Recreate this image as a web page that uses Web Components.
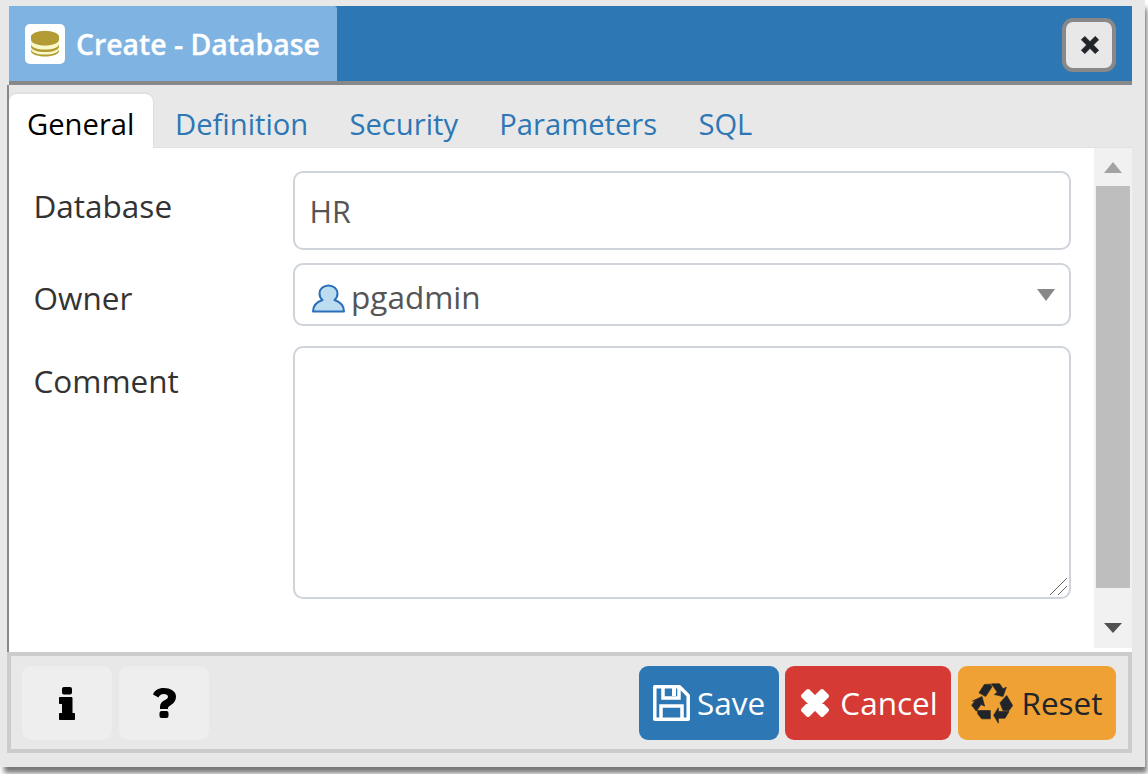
<!DOCTYPE html>
<html><head><meta charset="utf-8">
<style>
html,body{margin:0;padding:0;background:#fff;width:1148px;height:774px;overflow:hidden;font-family:"Open Sans",sans-serif}
</style></head><body>
<pg-dialog>
  <svg slot="icon" viewBox="0 0 40 40" width="40" height="40"><rect width="40" height="40" rx="5" fill="#fff"/><path d="M6 12v15c0 3 6 5.500 14 5.500s14-2.500 14-5.500V12z" fill="#b39b34"/><path d="M6 15.500c0 3.500 6 6 14 6s14-2.500 14-6v4.500c0 3.500-6 5.500-14 5.500s-14-2-14-5.500zM6 22.500c0 3.500 6 5.500 14 5.500s14-2 14-5.500v2.500c0 3.500-6 5.500-14 5.500s-14-2-14-5.500z" fill="#f8f8c8"/><ellipse cx="20" cy="12.800" rx="14" ry="6" fill="#b39b34"/></svg>
  <span slot="title">Create - Database</span>
  <pg-tabs slot="tabs"><span class="on">General</span><span>Definition</span><span>Security</span><span>Parameters</span><span>SQL</span></pg-tabs>
  <pg-form slot="body"></pg-form>
  <pg-footer slot="footer"></pg-footer>
</pg-dialog>
<script>
function def(name,html){customElements.define(name,class extends HTMLElement{constructor(){super();this.attachShadow({mode:'open'}).innerHTML=html;}});}
def('pg-dialog',`<style>
:host{display:flex;flex-direction:column;width:1145px;height:767px;background:#e8e8e8;box-shadow:3px 7px 5px -1px #777;box-sizing:border-box;padding:6px 13px 14px 7px}
.head{height:79px;box-sizing:border-box;flex:none;background:#2d77b5;margin-left:2px;display:flex;border-bottom:4px solid #888}
.ttl{width:328px;background:#7fb3e2;display:flex;align-items:center;box-sizing:border-box;padding:0 0 0 16px;gap:11px;color:#fff;font-weight:600;font-size:28.400px;border-radius:0 3px 0 0;height:75px;-webkit-text-stroke:.3px #fff}
.close{margin:12px 16px 0 auto;width:54px;height:54px;box-sizing:border-box;border:4px solid #888;border-radius:11px;background:#e8e8e8;display:flex;align-items:center;justify-content:center;padding-left:1px}
.main{flex:1;min-height:0;border-left:2px solid #888;display:flex;flex-direction:column}
.foot{flex:none}
</style>
<div class="head"><div class="ttl"><slot name="icon"></slot><slot name="title"></slot></div>
<div class="close"><svg width="20" height="20" viewBox="0 0 20 20"><path d="M4.800 1.500 10 6.700 15.200 1.500 18.500 4.800 13.300 10 18.500 15.200 15.200 18.500 10 13.300 4.800 18.500 1.500 15.200 6.700 10 1.500 4.800z" fill="#212529" stroke="#212529" stroke-linejoin="round"/></svg></div></div>
<div class="main"><slot name="tabs"></slot><slot name="body"></slot></div>
<div class="foot"><slot name="footer"></slot></div>`);
def('pg-tabs',`<style>
:host{display:flex;flex:none;height:63px;box-sizing:border-box;background:#e8e8e8;border-bottom:1px solid #dee2e6;padding:9px 0 0 0;font-size:29.200px;color:#2d77b5}
::slotted(span){padding:7px 20.600px 0;height:53px;box-sizing:border-box;line-height:46px}
::slotted(.on){background:#fff;color:#000;border-radius:8px 8px 0 0;height:54px;margin-bottom:-1px;margin-right:1.400px;padding:7px 20px 0 18px;box-shadow:0 -2px 0 #e0e0e0,1px 0 0 #ddd;width:144px;flex:none}
</style><slot></slot>`);
def('pg-form',`<style>
:host{display:flex;flex:1;min-height:0;background:#fff;color:#333}
.form{flex:1;padding:23px 23px 0 24.500px;display:grid;grid-template-columns:259.500px 1fr;grid-template-rows:79px 63px 253px;row-gap:13px;font-size:31.500px;align-content:start}
.form>label{padding-top:13px}
.f{border:2px solid #ced4da;border-radius:10px;box-sizing:border-box;display:flex;align-items:center;padding:0 14.500px;color:#555;position:relative;font-size:30.500px}
.f.c{margin-top:7px;height:253px}
label.lc{padding-top:20px!important}
.sel{padding-left:17px;gap:6px;padding-top:4px;font-size:31.500px}
.sel svg{margin-top:4px}
.caret{position:absolute;right:14px;top:24px;width:0;height:0;border:9px solid transparent;border-top:12px solid #888;border-bottom:0}
.grip{position:absolute;right:1px;bottom:1px}
.bar{width:38px;flex:none;background:#f1f1f1;padding:0 2px;box-sizing:border-box;display:flex;flex-direction:column;margin-bottom:4px}
.up{height:38px;flex:none;display:flex;align-items:center;justify-content:center}
.dn{height:60px;flex:none;display:flex;align-items:flex-end;justify-content:center;padding-bottom:15px;box-sizing:border-box}
.thumb{flex:1;background:#bebebe}
</style>
<div class="form"><label>Database</label><div class="f">HR</div>
<label>Owner</label><div class="f sel"><svg width="33" height="29" viewBox="0 0 33 29"><path d="M1 27.500c0-6 3.500-9.500 9.500-11.500-2-1.800-3-4-3-6.500C7.500 5 11.500 1.500 16.500 1.500s9 3.500 9 8c0 2.500-1 4.700-3 6.500 6 2 9.500 5.500 9.500 11.500z" fill="#bcdcf0" stroke="#2a6fbd" stroke-width="2" stroke-linejoin="round"/></svg><span>pgadmin</span><i class="caret"></i></div>
<label class="lc">Comment</label><div class="f c"><svg class="grip" width="20" height="20" viewBox="0 0 20 20"><path d="M2 19 19 2M10 19 19 10" stroke="#666" stroke-width="1"/></svg></div></div>
<div class="bar"><div class="up"><svg width="18" height="11"><path d="M0 11 9 0 18 11z" fill="#a3a3a3"/></svg></div><div class="thumb"></div><div class="dn"><svg width="18" height="10"><path d="M0 0H18L9 10z" fill="#505050"/></svg></div></div>`);
def('pg-footer',`<style>
:host{display:flex;box-sizing:border-box;height:101px;border:4px solid #ccc;background:#e8e8e8;padding:10px 12px 9px 11px;gap:7px;font-size:31.500px}
.b{height:74px;border-radius:9px;box-sizing:border-box;display:flex;align-items:center;justify-content:center;color:#fff}
.b span{padding-bottom:2px}
.g{width:90px;background:#eee}
.sp{flex:1}
.save{width:140px;background:#2d77b5;gap:7px;margin-right:-1px}
.cancel{width:166px;background:#d63a34;gap:10px;padding-left:2px}
.reset{width:158px;background:#efa134;color:#212529;gap:8px}
</style>
<div class="b g"><svg width="16" height="33" viewBox="0 0 16 33"><rect x="3" y="0" width="10" height="7.500" rx="2"/><path d="M1 10h11c1 0 1.500.5 1.500 1.500V26H15c.6 0 1 .4 1 1v5c0 .6-.4 1-1 1H1c-.6 0-1-.4-1-1v-5c0-.6.4-1 1-1h2V17H1c-.6 0-1-.4-1-1v-5c0-.6.4-1 1-1z"/></svg></div>
<div class="b g"><svg width="23" height="30" viewBox="0 0 23 30"><path d="M11 0C5 0 1.500 2.500 0 6.500L5.500 9.500C6.500 7.500 8 6 10.800 6 13 6 15 7 15 8.800 15 10.500 13.500 11.200 11.500 12.300 9.200 13.500 7 15.500 7 19V21H15V20C15 17.500 23 16.500 23 8.500 23 3 17 0 11 0Z"/><rect x="6.500" y="23" width="9" height="7" rx="2"/></svg></div>
<div class="sp"></div>
<div class="b save"><svg width="37" height="36" viewBox="0 0 37 36" fill="none" stroke="#fff" stroke-width="3.500"><path d="M1.800 1.800H26.500L35.200 10.500V34.200H1.800z" stroke-linejoin="round"/><path d="M10 2V13H26V2M8 34V21H29V34"/><rect x="19" y="3" width="4" height="8" fill="#fff" stroke="none"/></svg><span>Save</span></div>
<div class="b cancel"><svg width="30" height="30" viewBox="0 0 30 30"><path d="M8 3 15 10 22 3 27 8 20 15 27 22 22 27 15 20 8 27 3 22 10 15 3 8z" fill="#fff" stroke="#fff" stroke-width="4" stroke-linejoin="round"/></svg><span>Cancel</span></div>
<div class="b reset"><svg width="42" height="41" viewBox="18 26 126 122" fill="#212529" stroke="#212529" stroke-width="2" stroke-linejoin="round"><path d="M42 55 58 30 76 29 81 37 62 66z"/><path d="M79 28H104L114 43 124 38 114 66 88 60 97 53z"/><path d="M105 85 125 63 143 93 132 108 114 108z"/><path d="M86 122 100 100V111H132L120 131H100V146z"/><path d="M38 108H76V133H50L38 118z"/><path d="M22 80 51 66 59 95 48 90 34 110 20 92 31 78z"/></svg><span>Reset</span></div>`);
</script>
</body></html>
